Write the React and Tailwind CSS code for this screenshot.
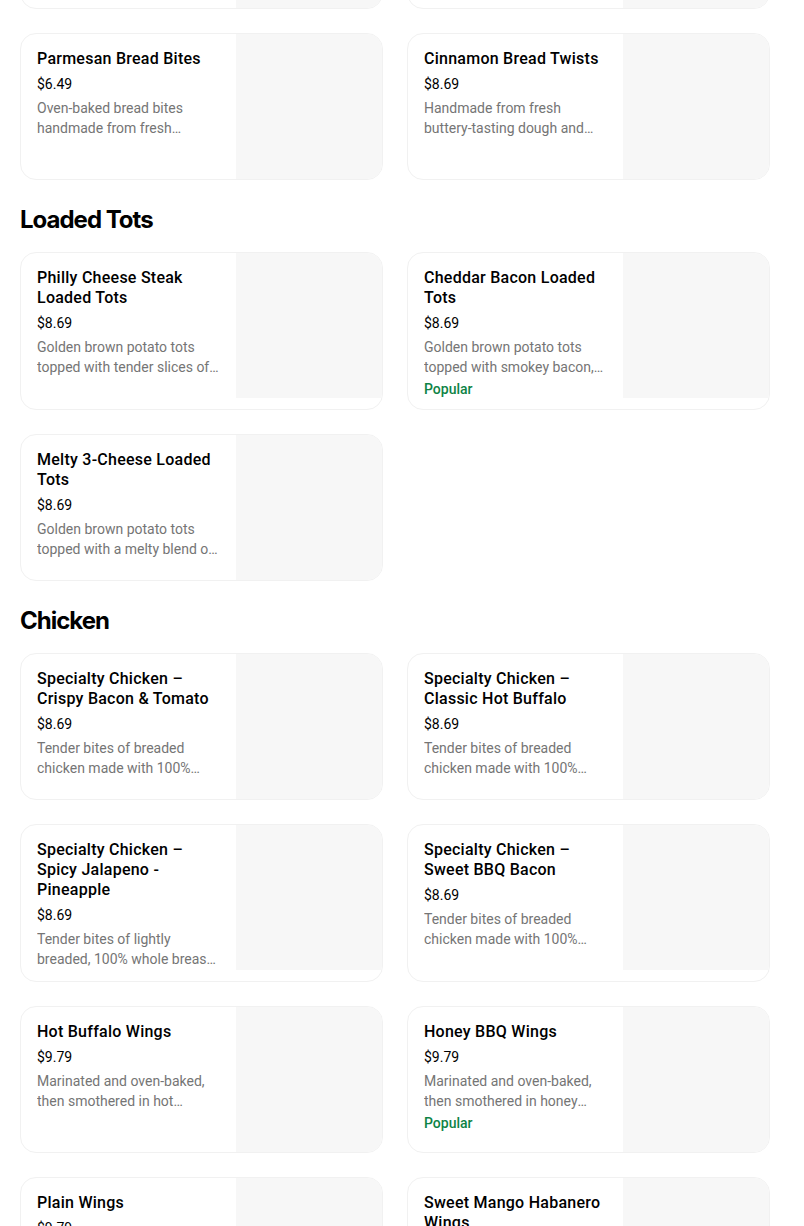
const sections = [
  {
    title: null,
    items: [
      { name: "Garlic Bread Twists", price: "$8.69", desc: "Handmade from fresh buttery-tasting dough and baked to a golden brown." },
      { name: "Stuffed Cheesy Bread", price: "$8.69", desc: "Oven-baked bread stuffed with a blend of cheeses." },
      {
        name: "Parmesan Bread Bites",
        price: "$6.49",
        desc: "Oven-baked bread bites handmade from fresh buttery-tasting dough and seasoned with garlic and Parmesan.",
      },
      {
        name: "Cinnamon Bread Twists",
        price: "$8.69",
        desc: "Handmade from fresh buttery-tasting dough and baked to a golden brown, then topped with cinnamon.",
      },
    ],
  },
  {
    title: "Loaded Tots",
    items: [
      {
        name: "Philly Cheese Steak Loaded Tots",
        price: "$8.69",
        desc: "Golden brown potato tots topped with tender slices of steak, onions, green peppers and cheese.",
      },
      {
        name: "Cheddar Bacon Loaded Tots",
        price: "$8.69",
        desc: "Golden brown potato tots topped with smokey bacon, cheddar cheese and ranch.",
        popular: true,
      },
      {
        name: "Melty 3-Cheese Loaded Tots",
        price: "$8.69",
        desc: "Golden brown potato tots topped with a melty blend of three cheeses.",
      },
    ],
  },
  {
    title: "Chicken",
    items: [
      {
        name: "Specialty Chicken – Crispy Bacon & Tomato",
        price: "$8.69",
        desc: "Tender bites of breaded chicken made with 100% whole breast white meat.",
      },
      {
        name: "Specialty Chicken – Classic Hot Buffalo",
        price: "$8.69",
        desc: "Tender bites of breaded chicken made with 100% whole breast white meat.",
      },
      {
        name: "Specialty Chicken – Spicy Jalapeno - Pineapple",
        price: "$8.69",
        desc: "Tender bites of lightly breaded, 100% whole breast white meat chicken.",
      },
      {
        name: "Specialty Chicken – Sweet BBQ Bacon",
        price: "$8.69",
        desc: "Tender bites of breaded chicken made with 100% whole breast white meat.",
      },
      {
        name: "Hot Buffalo Wings",
        price: "$9.79",
        desc: "Marinated and oven-baked, then smothered in hot buffalo sauce.",
      },
      {
        name: "Honey BBQ Wings",
        price: "$9.79",
        desc: "Marinated and oven-baked, then smothered in honey BBQ sauce.",
        popular: true,
      },
      { name: "Plain Wings", price: "$9.79", desc: "Marinated and oven-baked wings." },
      { name: "Sweet Mango Habanero Wings", price: "$9.79", desc: "Marinated and oven-baked, then smothered in sweet mango habanero sauce." },
    ],
  },
];

function ItemCard({ item }) {
  return (
    <div className="flex overflow-hidden rounded-2xl border border-[#f1f1f1] bg-white">
      <div className="flex min-w-0 flex-1 flex-col px-4 pt-[15px] pb-3">
        <h4 className="text-[16px] font-medium leading-5 tracking-[0.25px] text-[#000000]">{item.name}</h4>
        <p className="mt-[5px] text-[14px] leading-5 text-[#000000]">{item.price}</p>
        <p className="mt-1 line-clamp-2 text-[14px] leading-5 text-[#757575]">{item.desc}</p>
        {item.popular && <p className="mt-1 text-[14px] font-medium leading-4 text-[#0e8345]">Popular</p>}
      </div>
      <div className="h-[145px] w-[146px] shrink-0 bg-[#f7f7f7]" />
    </div>
  );
}

export default function App() {
  return (
    <div className="min-h-screen overflow-hidden bg-white" style={{ fontFamily: "Roboto, 'Liberation Sans', sans-serif" }}>
      <div className="-mt-[138px] ml-5 flex w-[750px] flex-col gap-6">
        {sections.map((s, i) => (
          <section key={i}>
            {s.title && (
              <h3 className="mb-4 font-['Inter'] text-[24px] font-bold leading-8 tracking-[-1px] text-black">{s.title}</h3>
            )}
            <div className="grid grid-cols-2 gap-6">
              {s.items.map((item) => (
                <ItemCard key={item.name} item={item} />
              ))}
            </div>
          </section>
        ))}
      </div>
    </div>
  );
}
